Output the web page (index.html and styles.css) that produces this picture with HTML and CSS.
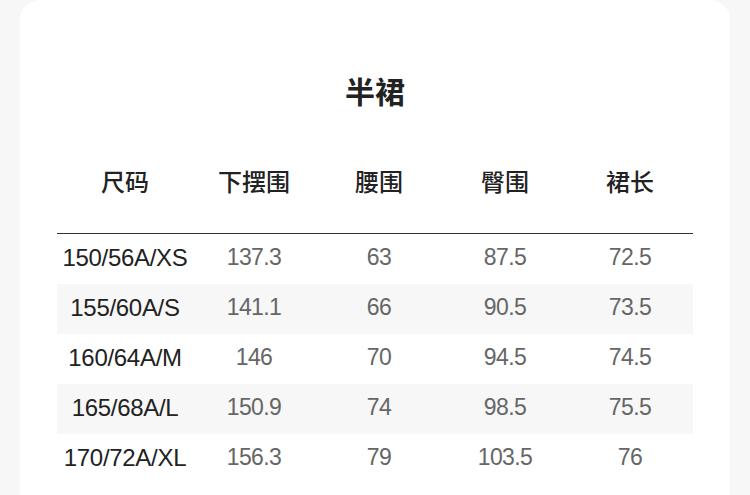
FILE: index.html
```html
<!DOCTYPE html>
<html lang="zh">
<head>
<meta charset="utf-8">
<link rel="stylesheet" href="styles.css">
</head>
<body>
<div class="card">
  <h1 class="title">半裙</h1>
  <div class="table">
    <div class="row head">
      <div>尺码</div><div>下摆围</div><div>腰围</div><div>臀围</div><div>裙长</div>
    </div>
    <div class="row data"><div class="size">150/56A/XS</div><div>137.3</div><div>63</div><div>87.5</div><div>72.5</div></div>
    <div class="row data alt"><div class="size">155/60A/S</div><div>141.1</div><div>66</div><div>90.5</div><div>73.5</div></div>
    <div class="row data"><div class="size">160/64A/M</div><div>146</div><div>70</div><div>94.5</div><div>74.5</div></div>
    <div class="row data alt"><div class="size">165/68A/L</div><div>150.9</div><div>74</div><div>98.5</div><div>75.5</div></div>
    <div class="row data"><div class="size">170/72A/XL</div><div>156.3</div><div>79</div><div>103.5</div><div>76</div></div>
  </div>
</div>
</body>
</html>
```

FILE: styles.css
```css
html, body {
  margin: 0;
  padding: 0;
  background: #f7f7f7;
}
body {
  padding: 0 20px;
  font-family: "Liberation Sans", "Noto Sans CJK SC", sans-serif;
}
.card {
  background: #ffffff;
  border-radius: 20px 20px 0 0;
  padding: 70px 37px 0;
  min-height: 495px;
  box-sizing: border-box;
}
.title {
  margin: 0;
  font-size: 30px;
  line-height: 40px;
  font-weight: bold;
  text-align: center;
  color: #222;
  font-family: "Noto Sans CJK SC", sans-serif;
}
.table {
  margin-top: 45px;
}
.row {
  display: grid;
  grid-template-columns: 136px 122px 128px 124px 126px;
  height: 50px;
  align-items: center;
  text-align: center;
  font-size: 23px;
  color: #666;
  letter-spacing: -0.6px;
}
.row.data {
  box-sizing: border-box;
  padding-bottom: 3px;
}
.row.head {
  height: 50px;
  padding-bottom: 28px;
  border-bottom: 1px solid #333;
  font-family: "Noto Sans CJK SC", sans-serif;
  font-size: 24px;
  font-weight: 500;
  color: #222;
  letter-spacing: 0;
}
.row.alt {
  background: #f7f7f7;
}
.size {
  color: #222;
  font-size: 24px;
  letter-spacing: -0.3px;
}
```
